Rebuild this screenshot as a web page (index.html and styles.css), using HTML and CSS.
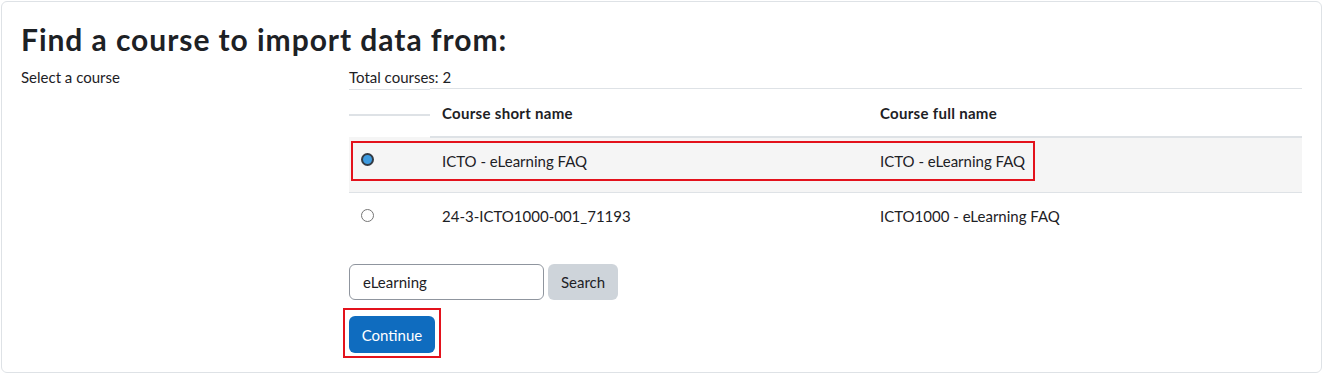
FILE: index.html
```html
<!DOCTYPE html>
<html lang="en">
<head>
    <meta charset="UTF-8">
    <title>Import</title>
    <link rel="stylesheet" href="styles.css">
</head>
<body>
    <div class="importCard">
        <h2 class="importCard_title">Find a course to import data from:</h2>
        <form class="importForm">
            <div class="importForm_label">Select a course</div>
            <div class="importForm_field">
                <div class="importForm_total">Total courses: 2</div>
                <div class="courseTable_wrap">
                    <table class="courseTable">
                        <thead>
                            <tr>
                                <th class="courseTable_select"><div class="courseTable_selectHead"></div></th>
                                <th class="courseTable_short">Course short name</th>
                                <th class="courseTable_full">Course full name</th>
                            </tr>
                        </thead>
                        <tbody>
                            <tr class="courseTable_odd">
                                <td><input type="radio" name="importid" class="courseTable_radio" checked></td>
                                <td>ICTO - eLearning FAQ</td>
                                <td>ICTO - eLearning FAQ</td>
                            </tr>
                            <tr>
                                <td><input type="radio" name="importid" class="courseTable_radio"></td>
                                <td>24-3-ICTO1000-001_71193</td>
                                <td>ICTO1000 - eLearning FAQ</td>
                            </tr>
                        </tbody>
                    </table>
                    <div class="markBox markBox_row"></div>
                </div>
                <div class="searchBar">
                    <input type="text" class="searchBar_input" value="eLearning">
                    <button type="button" class="searchBar_btn">Search</button>
                </div>
                <div class="continueWrap">
                    <button type="button" class="continueBtn">Continue</button>
                </div>
            </div>
        </form>
    </div>
</body>
</html>
```

FILE: styles.css
```css
body{
    margin: 0;
    background: #ffffff;
    font-family: Lato, "Noto Sans", sans-serif;
    font-size: 15px;
    line-height: 22px;
    color: #1d2125;
}
.importCard{
    margin: 1px 0 0 1px;
    width: 1281px;
    height: 351px;
    padding: 19px 19px 0 19px;
    border: 1px solid #dee2e6;
    border-radius: 6px;
}
.importCard_title{
    margin: 0 0 9px 0;
    font-size: 30px;
    line-height: 36px;
    font-weight: 700;
    letter-spacing: 0.95px;
}
.importForm{
    display: flex;
}
.importForm_label{
    width: 328px;
    flex-shrink: 0;
}
.importForm_field{
    flex: 1;
}
.courseTable_wrap{
    position: relative;
    width: 953px;
}
.courseTable{
    width: 953px;
    border-collapse: collapse;
}
.courseTable th{
    text-align: left;
    font-weight: 700;
    padding: 13px 12px 12px 12px;
    border-top: 1px solid #dee2e6;
    border-bottom: 2px solid #dee2e6;
    vertical-align: top;
    letter-spacing: 0.3px;
}
.courseTable th.courseTable_select{
    width: 81px;
    padding: 0;
    border: none;
}
.courseTable_selectHead{
    height: 24px;
    border-top: 1px solid #dee2e6;
    border-bottom: 2px solid #dee2e6;
}
.courseTable_short{
    width: 414px;
}
.courseTable td{
    padding: 12px 12px 20px 12px;
    border-bottom: 1px solid #dee2e6;
    vertical-align: top;
}
.courseTable tbody tr:last-child td{
    border-bottom: none;
}
.courseTable_odd{
    background: #f5f5f5;
}
.courseTable_radio{
    appearance: none;
    -webkit-appearance: none;
    display: block;
    width: 13px;
    height: 13px;
    margin: 4px 0 0 0;
    border: 1px solid #767676;
    border-radius: 50%;
    background: #ffffff;
}
.courseTable_radio:checked{
    border: 2px solid #333b44;
    background: #3d9be0;
}
.markBox{
    position: absolute;
    border: 2px solid #e3121c;
}
.markBox_row{
    left: 2px;
    top: 53px;
    width: 680px;
    height: 36px;
}
.searchBar{
    display: flex;
    gap: 4px;
    margin-top: 17px;
}
.searchBar_input{
    width: 195px;
    height: 36px;
    box-sizing: border-box;
    padding: 0 13px;
    border: 1px solid #8f959e;
    border-radius: 6px;
    font-family: inherit;
    font-size: 15px;
    color: #1d2125;
}
.searchBar_btn{
    width: 70px;
    height: 36px;
    border: none;
    border-radius: 6px;
    background: #ced4da;
    font-family: inherit;
    font-size: 15px;
    color: #1d2125;
}
.continueWrap{
    position: relative;
    display: inline-block;
    margin-top: 16px;
}
.continueWrap::after{
    content: "";
    position: absolute;
    left: -6px;
    right: -6px;
    top: -8px;
    bottom: -5px;
    border: 2px solid #e3121c;
}
.continueBtn{
    display: block;
    width: 86px;
    height: 37px;
    border: none;
    border-radius: 6px;
    background: #0f6cbf;
    color: #ffffff;
    font-family: inherit;
    font-size: 15px;
}
```
